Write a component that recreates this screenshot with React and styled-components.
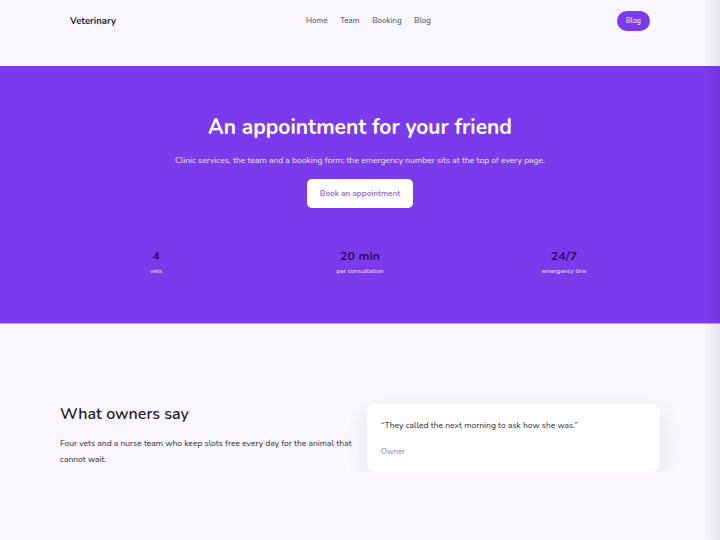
import React from "react";
import styled, { createGlobalStyle } from "styled-components";

const GlobalStyle = createGlobalStyle`
	* { box-sizing: border-box; }
	body {
		margin: 0;
		background: #f9f7fd;
		font-family: "Nunito", "Lato", "Noto Sans", sans-serif;
		color: #1e1b2e;
	}
	body::after {
		content: "";
		position: fixed;
		top: 0;
		right: 0;
		width: 16px;
		height: 100vh;
		background: linear-gradient(to right, rgba(0, 0, 0, 0), rgba(40, 30, 70, 0.09));
		pointer-events: none;
	}
`;

const stats = [
	{ value: "4", label: "vets" },
	{ value: "20 min", label: "per consultation" },
	{ value: "24/7", label: "emergency line" },
];

export default function App() {
	return (
		<>
			<GlobalStyle />
			<Header>
				<Nav>
					<Logo>Veterinary</Logo>
					<Links>
						<span>Home</span>
						<span>Team</span>
						<span>Booking</span>
						<span>Blog</span>
					</Links>
					<PillButton>Blog</PillButton>
				</Nav>
			</Header>
			<Hero>
				<h1>An appointment for your friend</h1>
				<p>Clinic services, the team and a booking form; the emergency number sits at the top of every page.</p>
				<HeroButton>Book an appointment</HeroButton>
				<Stats>
					{stats.map((s) => (
						<Stat key={s.label}>
							<strong>{s.value}</strong>
							<span>{s.label}</span>
						</Stat>
					))}
				</Stats>
			</Hero>
			<Section>
				<div className="text">
					<h2>What owners say</h2>
					<p>Four vets and a nurse team who keep slots free every day for the animal that cannot wait.</p>
				</div>
				<Card>
					<p>“They called the next morning to ask how she was.”</p>
					<span>Owner</span>
				</Card>
			</Section>
		</>
	);
}

const Header = styled.header`
	height: 66px;
	display: flex;
	justify-content: center;
`;

const Nav = styled.nav`
	width: 600px;
	height: 41px;
	padding: 0 10px;
	display: flex;
	align-items: center;
	justify-content: space-between;
`;

const Logo = styled.div`
	font-size: 9.5px;
	font-weight: 700;
	color: #1e1b2e;
	width: 150px;
`;

const Links = styled.div`
	display: flex;
	gap: 12.5px;
	margin-left: 86px;
	span {
		font-size: 8px;
		color: #4b4860;
	}
`;

const PillButton = styled.button`
	margin-left: auto;
	width: 33px;
	height: 20px;
	border: 0;
	border-radius: 10px;
	background: #7c3aed;
	color: #fff;
	font-family: inherit;
	font-size: 7px;
	padding: 0;
`;

const Hero = styled.section`
	background: #7c3aed;
	border-bottom: 1.5px solid #c29cf9;
	height: 258px;
	display: flex;
	flex-direction: column;
	align-items: center;
	padding-top: 48px;
	color: #fff;
	h1 {
		margin: 0;
		font-size: 21px;
		font-weight: 700;
		line-height: 26px;
	}
	p {
		margin: 14px 0 0;
		font-size: 8.5px;
		color: #efe7fd;
	}
`;

const HeroButton = styled.button`
	margin-top: 13px;
	width: 106px;
	height: 29px;
	border: 0;
	border-radius: 5px;
	background: #fff;
	color: #7c3aed;
	font-family: inherit;
	font-size: 8.4px;
`;

const Stats = styled.div`
	margin-top: 40px;
	width: 612px;
	display: grid;
	grid-template-columns: repeat(3, 1fr);
`;

const Stat = styled.div`
	display: flex;
	flex-direction: column;
	align-items: center;
	strong {
		font-size: 12.5px;
		font-weight: 700;
		color: #2e1065;
		line-height: 16px;
	}
	span {
		margin-top: 2px;
		font-size: 6.5px;
		color: #ebe2fd;
	}
`;

const Section = styled.section`
	width: 600px;
	margin: 0 auto;
	padding-top: 80px;
	display: grid;
	grid-template-columns: 1fr 1fr;
	gap: 14px;
	h2 {
		margin: 0;
		font-size: 16px;
		font-weight: 600;
		line-height: 20px;
		color: #1e1b2e;
	}
	.text p {
		margin: 11px 0 0;
		font-size: 8.5px;
		line-height: 16px;
		color: #2c2a3a;
	}
`;

const Card = styled.div`
	background: #fff;
	border-radius: 8px;
	box-shadow: 0 8px 22px rgba(30, 20, 60, 0.09);
	padding: 15px 14px 14px;
	height: 68px;
	p {
		margin: 0;
		font-size: 8.5px;
		color: #2c2a3a;
	}
	span {
		display: block;
		margin-top: 15px;
		font-size: 7.8px;
		color: #8b889a;
	}
`;
